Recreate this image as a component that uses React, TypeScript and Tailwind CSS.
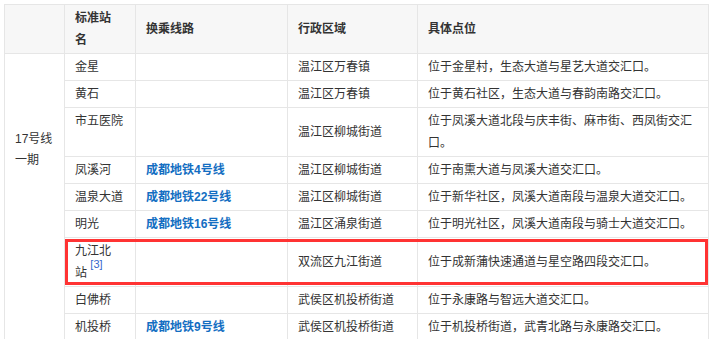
import type { ReactNode } from 'react';

type Row = {
  name: ReactNode;
  line?: string;
  district: string;
  spot: ReactNode;
  tall?: boolean;
};

const rows: Row[] = [
  { name: '金星', district: '温江区万春镇', spot: '位于金星村，生态大道与星艺大道交汇口。' },
  { name: '黄石', district: '温江区万春镇', spot: '位于黄石社区，生态大道与春韵南路交汇口。' },
  {
    name: '市五医院',
    district: '温江区柳城街道',
    spot: (
      <>
        位于凤溪大道北段与庆丰街、麻市街、西凤街交汇
        <br />
        口。
      </>
    ),
    tall: true,
  },
  { name: '凤溪河', line: '成都地铁4号线', district: '温江区柳城街道', spot: '位于南熏大道与凤溪大道交汇口。' },
  { name: '温泉大道', line: '成都地铁22号线', district: '温江区柳城街道', spot: '位于新华社区，凤溪大道南段与温泉大道交汇口。' },
  { name: '明光', line: '成都地铁16号线', district: '温江区涌泉街道', spot: '位于明光社区，凤溪大道南段与骑士大道交汇口。' },
  {
    name: (
      <>
        九江北
        <br />
        站 <sup className="relative -top-[4px] align-super text-[11px] leading-none text-[#3366cc]">[3]</sup>
      </>
    ),
    district: '双流区九江街道',
    spot: '位于成新蒲快速通道与星空路四段交汇口。',
  },
  { name: '白佛桥', district: '武侯区机投桥街道', spot: '位于永康路与智远大道交汇口。' },
  { name: '机投桥', line: '成都地铁9号线', district: '武侯区机投桥街道', spot: '位于机投桥街道，武青北路与永康路交汇口。' },
];

const cell = 'border border-[#e6e6e6] px-[10px] py-[2px] align-middle';

export default function App() {
  return (
    <div className="h-[339px] w-[711px] overflow-hidden bg-white pl-[4px] pt-[4px] font-['Liberation_Sans','Noto_Sans_CJK_SC',sans-serif] text-[12px] leading-[22px] text-[#333]">
      <div className="relative w-[704px]">
        <table className="w-[704px] table-fixed border-collapse">
          <colgroup>
            <col className="w-[60px]" />
            <col className="w-[71px]" />
            <col className="w-[152px]" />
            <col className="w-[130px]" />
            <col className="w-[291px]" />
          </colgroup>
          <thead>
            <tr className="bg-[#f7f7f7] text-left font-bold">
              <th className={cell}></th>
              <th className={cell}>
                标准站
                <br />
                名
              </th>
              <th className={cell}>换乘线路</th>
              <th className={cell}>行政区域</th>
              <th className={cell}>具体点位</th>
            </tr>
          </thead>
          <tbody>
            {rows.map((row, i) => (
              <tr key={i}>
                {i === 0 ? (
                  <td rowSpan={rows.length} className="border border-[#e6e6e6] px-[10px] pt-[75px] align-top leading-[21px]">
                    17号线
                    <br />
                    一期
                  </td>
                ) : null}
                <td className={row.tall ? 'border border-[#e6e6e6] px-[10px] py-[2px] align-top' : cell}>{row.name}</td>
                <td className={cell}>
                  {row.line ? <a className="font-bold text-[#136ec2]">{row.line}</a> : null}
                </td>
                <td className={cell}>{row.district}</td>
                <td className={cell}>{row.spot}</td>
              </tr>
            ))}
          </tbody>
        </table>
        <div className="pointer-events-none absolute left-[61px] top-[235px] h-[46px] w-[643px] border-[3px] border-[#ff3333]" />
      </div>
    </div>
  );
}
